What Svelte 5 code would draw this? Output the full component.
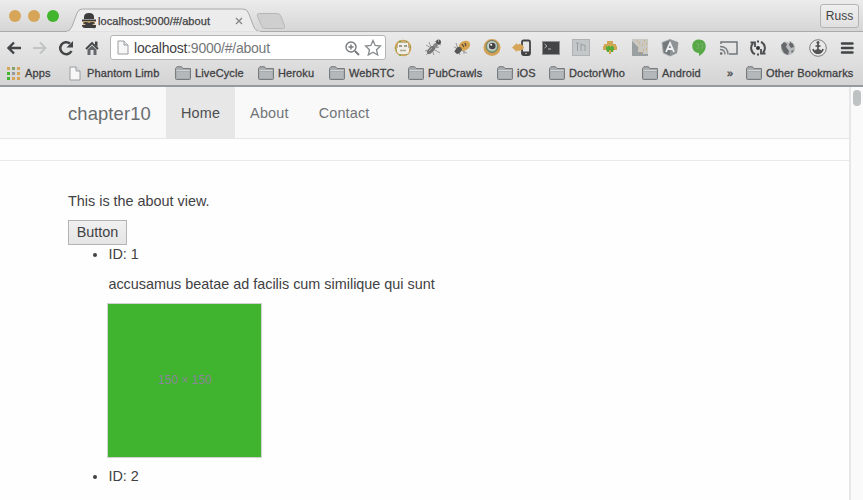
<script>
  const bookmarks = [
    { label: 'Apps', icon: 'apps' },
    { label: 'Phantom Limb', icon: 'page' },
    { label: 'LiveCycle', icon: 'folder' },
    { label: 'Heroku', icon: 'folder' },
    { label: 'WebRTC', icon: 'folder' },
    { label: 'PubCrawls', icon: 'folder' },
    { label: 'iOS', icon: 'folder' },
    { label: 'DoctorWho', icon: 'folder' },
    { label: 'Android', icon: 'folder' },
    { label: '»', icon: '' },
    { label: 'Other Bookmarks', icon: 'folder' }
  ];
  const extensions = ['monkey', 'bug', 'bee', 'eye', 'phone', 'terminal', 'box', 'android', 'noise', 'angular', 'hangouts', 'cast', 'sync', 'globe', 'anchor', 'menu'];
  const dotColors = ['#d6a557', '#84a26d', '#d6a557', '#42b42e', '#999', '#d6a557', '#42b42e', '#d6a557', '#d6a557'];
</script>

{#snippet page()}
  <svg class="page-icon" width="12" height="15" viewBox="0 0 12 15"><path d="M1 1h6l4 4v9H1z" fill="#f7f7f7" stroke="#999c9e" /><path d="M7 1v4h4" fill="#e2e2e2" stroke="#999c9e" /></svg>
{/snippet}

{#snippet extension(name)}
  <svg width="20" height="20" viewBox="0 0 20 20" fill="none">
    {#if name === 'monkey'}
      <circle cx="10" cy="10" r="7.5" fill="#bdb594" stroke="#cda358" stroke-width="1.7" />
      <path d="M5 5h10v5h1v4l-2 2H6l-2-2v-4h1z" fill="#f0eee6" />
      <path d="M6 7h3v2H6zM11 7h3v2h-3z" fill="#9b9b8f" /><path d="M7 12.500h6" stroke="#aaa893" stroke-width="1.500" />
      <path d="M6 3.500h2M13 3.500h1M2 10h1M17 9h1M6 17h2M13 16.500h1M3 13h1" stroke="#55a63b" />
    {:else if name === 'bug'}
      <path d="m3 7 14 8M6 4l5 13M2 13l14-4M3 17l5-5 5-7M12 3l3 3 3 1" stroke="#9a9a9a" />
      <ellipse cx="8" cy="12" rx="2.600" ry="5" transform="rotate(45 8 12)" fill="#747474" /><path d="m6 13 3-3" stroke="#aaa" /><circle cx="12.500" cy="7.500" r="2.300" fill="#858585" /><circle cx="15.500" cy="4" r="2.500" fill="#555" /><path d="M15 3h1" stroke="#ddd" />
    {:else if name === 'bee'}
      <path d="m2 9 13 6M4 5l4 12M2 14l9-9M12 16v-4" stroke="#999" />
      <ellipse cx="12.500" cy="8" rx="6" ry="4.500" transform="rotate(-30 12 8)" fill="#d6a34e" />
      <path d="m10 6 2 3M13 5l1 3" stroke="#574d3d" stroke-width="1.300" /><ellipse cx="6.500" cy="12" rx="2.800" ry="3.800" transform="rotate(40 6 12)" fill="#555" />
    {:else if name === 'eye'}
      <circle cx="10" cy="9.500" r="8.500" fill="#d2a155" /><circle cx="10" cy="8.500" r="6" fill="#85ae83" stroke="#747b68" /><circle cx="10" cy="8" r="4.800" fill="#c9d0ce" /><circle cx="10.300" cy="8" r="3.300" fill="#444" /><circle cx="9.200" cy="6.800" r="1" fill="#fff" />
    {:else if name === 'phone'}
      <rect x="10" y="2.500" width="8" height="14.500" rx="1.500" fill="#e5e5e5" stroke="#424242" stroke-width="1.800" /><path d="M10 13.500h8V17h-8z" fill="#424242" /><circle cx="14" cy="15.500" r=".7" fill="#ddd" /><path d="M0 9.500 5 5v1.500q5-2 7 3-2 4-7 3V14z" fill="#d6a557" />
    {:else if name === 'terminal'}
      <rect x="1.500" y="3.500" width="17" height="13" fill="#424446" stroke="#929292" /><path d="m3.500 6 2.500 2-2.500 2M7 11h3" stroke="#b7b7b7" />
    {:else if name === 'box'}
      <rect x="1.500" y="1.500" width="17" height="16" fill="#c4c7c8" stroke="#b0b3b4" /><path d="M5 5h3M6.500 5v8M10 5v8M10 7h4v6" stroke="#989ea1" />
    {:else if name === 'android'}
      <path d="M7 3h6v3h3v2h1v4h-3l-1 2h-2v2H9v-2H7l-1-2H3V8h1V6h3z" fill="#d0a754" /><path d="M6 8h1v1h1V8h2v1h1V8h2v1h1v3h-1v2h-2v-2H9v2H7v-2H6z" fill="#52ac39" />
    {:else if name === 'noise'}
      <rect x="2" y="1" width="16" height="17" rx="1" fill="#c9c8c3" /><path d="M2 3v15h16v-2h-5v-2H8V9L5 6z" fill="#9a9fa2" /><path d="M7 3h1M9 5h1M14 3h1M12 7h1M16 6h1M8 10h1M13 12h1M16 11h1M11 15h1" stroke="#d6a04d" />
    {:else if name === 'angular'}
      <path d="m10 1.500 8 3-1.300 10.500L10 18l-6.700-3L2 4.500z" fill="#74797c" stroke="#a5a8aa" /><path d="M10 1.500V18l6.700-3L18 4.500z" fill="#8e9396" /><path d="M6 14 10 5l4 9M7.500 11h5" stroke="#f1f1f1" stroke-width="1.800" />
    {:else if name === 'hangouts'}
      <path d="M10 1.500c4 0 6.700 2.800 6.700 6.500 0 4.700-3 8-6.700 10v-3c-4 0-6.700-3-6.700-7S6 1.500 10 1.500z" fill="#57a946" /><path d="M7 6h2.500v3L8 11M11 6h2.500v3L12 11" stroke="#78ae6a" stroke-width="1.200" />
    {:else if name === 'cast'}
      <path d="M2 6V4h16v12h-8" stroke="#70767a" stroke-width="1.500" /><path d="M1 8.500q8 0 8 8M1 11.500q5 0 5 5" stroke="#777d80" stroke-width="1.300" /><circle cx="2.200" cy="15.500" r="1.300" fill="#666" />
    {:else if name === 'sync'}
      <path d="M7 16.200A7 7 0 0 1 5 5.200M13 3.800A7 7 0 0 1 15 14.800" stroke="#4b4d4f" stroke-width="2" /><path d="M2.500 4.500H7V9M17.500 15.500H13V11M9 3.500h2M9 16.500h2" stroke="#4b4d4f" stroke-width="1.800" /><circle cx="10" cy="10" r="2" fill="#333" />
    {:else if name === 'globe'}
      <circle cx="10" cy="10" r="7.200" fill="#b8bcbd" /><path d="m3 7 3-3 3 2-1 3 3 4-1 4-4-2-2-4zM12 4l3 2 1 3-3 1-2-3zM13 13l3-1-2 3z" fill="#65686a" /><path d="m8 4 2-1 1 2" stroke="#eee" />
    {:else if name === 'anchor'}
      <circle cx="10" cy="10" r="8.300" fill="#e9e9e9" stroke="#7c7c7c" /><path d="M10 5v9M7.500 8h5M5 11q1 4 5 4t5-4" stroke="#4b4b4b" stroke-width="1.600" /><circle cx="10" cy="4.500" r="1.500" fill="#555" /><path d="M6 13q4-4 8 0l-2 3H8z" fill="#555" />
    {:else}
      <path d="M5 5.500h10.500M5 10h10.500M5 14.500h10.500" stroke="#424446" stroke-width="2.500" stroke-linecap="round" />
    {/if}
  </svg>
{/snippet}

<div class="browser">
  <header class="tabs">
    <div class="lights"><i></i><i></i><i class="green"></i></div>
    <div class="tab">
      <svg class="tab-shape" width="195" height="24" viewBox="0 0 195 24"><path d="M0 23.500q4 0 6-5L11 5q1.500-4 5-4h161q4 0 5.500 4l5 13q2 5.500 7 5.500" fill="#ececec" stroke="#aaa" /><path d="M1 24h193" stroke="#e8e8e8" stroke-width="1.500" /></svg>
      <div class="tab-content">
        <svg width="14" height="16" viewBox="0 0 14 16"><path d="M2 4q0-4 5-4t5 4v2H2zM0 6.500h14v2H0z" fill="#3d3d3d" /><path d="M1 8.500h12v3H1z" fill="#d6a557" /><path d="M1 10q3-2 6 0 3-2 6 0l-3 2H4zM0 12h14v2q-1 2-3 1H3q-3 0-3-3z" fill="#3d3d3d" /></svg>
        <span class="tab-title">localhost:9000/#/about</span>
        <svg class="close" width="8" height="8" viewBox="0 0 8 8"><path d="m1 1 6 6M7 1 1 7" stroke="#858585" stroke-width="1.300" /></svg>
      </div>
    </div>
    <svg class="new-tab" width="30" height="16" viewBox="0 0 30 16"><path d="M2.500.5h19q2 0 3 2l4 10q1 3-2 3h-17q-3 0-4-3l-4-9q-1-3 1-3z" fill="#cfcfcf" stroke="#b5b7b8" /></svg>
    <div class="user">Russ</div>
  </header>

  <div class="toolbar">
    <nav class="controls">
      <svg viewBox="0 0 20 20"><path d="M17 10H5M10 4.500 4.500 10l5.500 5.500" fill="none" stroke="#424446" stroke-width="2.400" /></svg>
      <svg viewBox="0 0 20 20"><path d="M3 10h12M10 4.500l5.500 5.500-5.500 5.500" fill="none" stroke="#c1c3c4" stroke-width="2" /></svg>
      <svg viewBox="0 0 20 20"><path d="M15.500 13A6 6 0 1 1 14 5.500" fill="none" stroke="#424446" stroke-width="2.500" /><path d="M17 3v6.500h-6.500z" fill="#424446" /></svg>
      <svg viewBox="0 0 20 20"><path d="M4 11 10 5l6 6" fill="none" stroke="#424446" stroke-width="1.800" /><path d="M13 3.500h2.500V9L13 6.500z" fill="#424446" /><path d="M5.500 11.500 10 7.500l4.500 4V17h-3v-5h-3v5h-3z" fill="#65686a" /></svg>
    </nav>
    <div class="address">
      {@render page()}
      <span class="url"><b>localhost</b>:9000/#/about</span>
      <svg width="16" height="16" viewBox="0 0 16 16"><g fill="none" stroke="#777b7e" stroke-width="1.400"><circle cx="7" cy="7" r="5" /><path d="M4.500 7h5M7 4.500v5" /><path d="m11 11 4 4" stroke-width="2" /></g></svg>
      <svg class="star" width="18" height="18" viewBox="0 0 18 18"><path d="m9 1.500 2.200 5 5.300.6-4 3.600 1.200 5.300L9 13.200 4.300 16l1.200-5.300-4-3.600 5.300-.6z" fill="#fff" stroke="#858a8d" stroke-width="1.300" /></svg>
    </div>
    <div class="extensions">
      {#each extensions as name}<span>{@render extension(name)}</span>{/each}
    </div>
  </div>

  <div class="bookmarks">
    {#each bookmarks as item}
      <div class="bookmark">
        {#if item.icon === 'folder'}
          <svg class="folder" width="16" height="14" viewBox="0 0 16 14"><path d="M.5 12.500v-10L2 .7h4.500L8 2.500h7.500v10q0 1-1 1h-13q-1 0-1-1z" fill="#a8acae" stroke="#777c7f" /><path d="M1.500 4.500h13" stroke="#d2d4d5" /><path d="M2 6h12v6H2z" fill="#b4b8ba" /></svg>
        {:else if item.icon === 'page'}
          {@render page()}
        {:else if item.icon === 'apps'}
          <svg class="apps" width="13" height="13" viewBox="0 0 13 13">{#each dotColors as color, i}<rect x={(i % 3) * 5} y={Math.floor(i / 3) * 5} width="3" height="3" fill={color} />{/each}</svg>
        {/if}
        <span>{item.label}</span>
      </div>
    {/each}
  </div>

  <div class="viewport">
    <div class="content">
      <nav class="navbar">
        <span class="brand">chapter10</span>
        <span class="link active">Home</span>
        <span class="link">About</span>
        <span class="link">Contact</span>
      </nav>
      <div class="divider"></div>
      <main>
        <p class="intro">This is the about view.</p>
        <button>Button</button>
        <ul>
          <li>
            <div>ID: 1</div>
            <p>accusamus beatae ad facilis cum similique qui sunt</p>
            <div class="thumb"><span>150 × 150</span></div>
          </li>
          <li><div>ID: 2</div></li>
        </ul>
      </main>
    </div>
    <aside><i></i></aside>
  </div>
</div>

<style>
  :global(body) { margin: 0; }
  * { box-sizing: border-box; }
  .browser { width: 863px; height: 500px; overflow: hidden; background: #fefefe; color: #3f4143; font-family: "Liberation Sans", Arial, sans-serif; display: flex; flex-direction: column; }
  svg { display: block; flex: none; }
  .tabs { height: 32px; flex: none; display: flex; background: linear-gradient(#ececec, #d6d6d6); border-bottom: 1px solid #aaa; }
  .lights { display: flex; gap: 7px; padding: 10px 0 0 9px; width: 66px; }
  .lights i { width: 12px; height: 12px; border-radius: 50%; background: #d6a557; }
  .lights .green { background: #42b42e; }
  .tab { width: 190px; display: grid; grid-template-columns: 190px; padding-top: 8px; height: 32px; }
  .tab-shape, .tab-content { grid-area: 1 / 1; }
  .tab-content { z-index: 1; display: flex; align-items: center; padding: 1px 13px 0 16px; height: 24px; }
  .tab-title { font-size: 11px; letter-spacing: .06px; margin-left: 2px; -webkit-text-stroke: .25px #3f4143; white-space: nowrap; }
  .close { margin-left: auto; }
  .new-tab { margin-top: 13px; }
  .user { width: 39px; height: 24px; margin: 4px 4px 0 auto; border: 1px solid #b2b4b5; border-radius: 3px; background: linear-gradient(#efefef, #e0e0e0); font-size: 12px; line-height: 23px; text-align: center; }
  .toolbar { height: 31px; flex: none; background: linear-gradient(#eaeaea, #dedede); display: flex; align-items: center; }
  .controls { width: 110px; display: flex; gap: 6px; padding-left: 4px; }
  .controls svg { width: 20px; height: 20px; }
  .address { width: 276px; height: 25px; border: 1px solid #b2b5b7; border-radius: 3px; background: #fff; display: flex; align-items: center; padding: 0 3px 0 6px; }
  .url { font-size: 14px; letter-spacing: -.23px; margin-left: 5px; flex: 1; color: #74787a; }
  .url b { font-weight: 400; color: #3f4143; }
  .star { margin-left: 4px; }
  .extensions { display: grid; grid-template-columns: repeat(16, 29.6px); margin-left: 2.500px; }
  .extensions span { display: flex; justify-content: center; }
  .bookmarks { height: 24px; flex: none; border-bottom: 2px solid #969a9c; background: linear-gradient(#dedede, #d4d4d4); padding: 0 0 2px 7px; display: grid; grid-template-columns: 62px 106px 83px 71px 79px 89px 52px 93px 85px 19px 117px; }
  .bookmark { display: flex; align-items: center; gap: 4px; font-size: 11px; -webkit-text-stroke: .3px #3f4143; white-space: nowrap; letter-spacing: .12px; }
  .bookmark .page-icon { margin-right: 2px; }
  .apps { margin-right: 1px; }
  .viewport { display: flex; flex: 1; min-height: 0; }
  .content { width: 849px; font-size: 14.400px; line-height: 20.400px; }
  .navbar { height: 52px; background: #f9f9f9; border-bottom: 1px solid #e6e6e6; display: flex; line-height: 53px; padding-left: 68px; }
  .brand { width: 98px; font-size: 18.400px; letter-spacing: .12px; color: #696d70; }
  .link { padding: 0 15px; font-size: 14.400px; letter-spacing: .18px; color: #707477; }
  .link.active { color: #4b4d4f; background: #e7e7e7; }
  .divider { height: 22px; border-bottom: 1px solid #e9e9e9; }
  main { padding: 30px 0 0 68px; }
  p { margin: 0; }
  button { display: block; width: 59px; height: 25px; margin-top: 9px; padding: 0 0 1px; border: 1px solid #b1b3b4; background: linear-gradient(#f0f0f0, #e5e5e5); font: inherit; color: inherit; }
  ul { margin: -1px 0 0; padding-left: 40.400px; }
  li p { margin: 9.500px 0 9px; }
  .thumb { width: 153px; height: 153px; background: #40b42e; outline: 1px solid #d0d3d1; margin-bottom: 9px; display: grid; place-items: center; color: #8b869a; font-size: 12px; }
  aside { width: 14px; border-left: 2px solid #e7e7e7; background: #fafafa; padding: 3px 2px; }
  aside i { display: block; width: 8px; height: 16px; border-radius: 4px; background: #bfc2c3; }
</style>
